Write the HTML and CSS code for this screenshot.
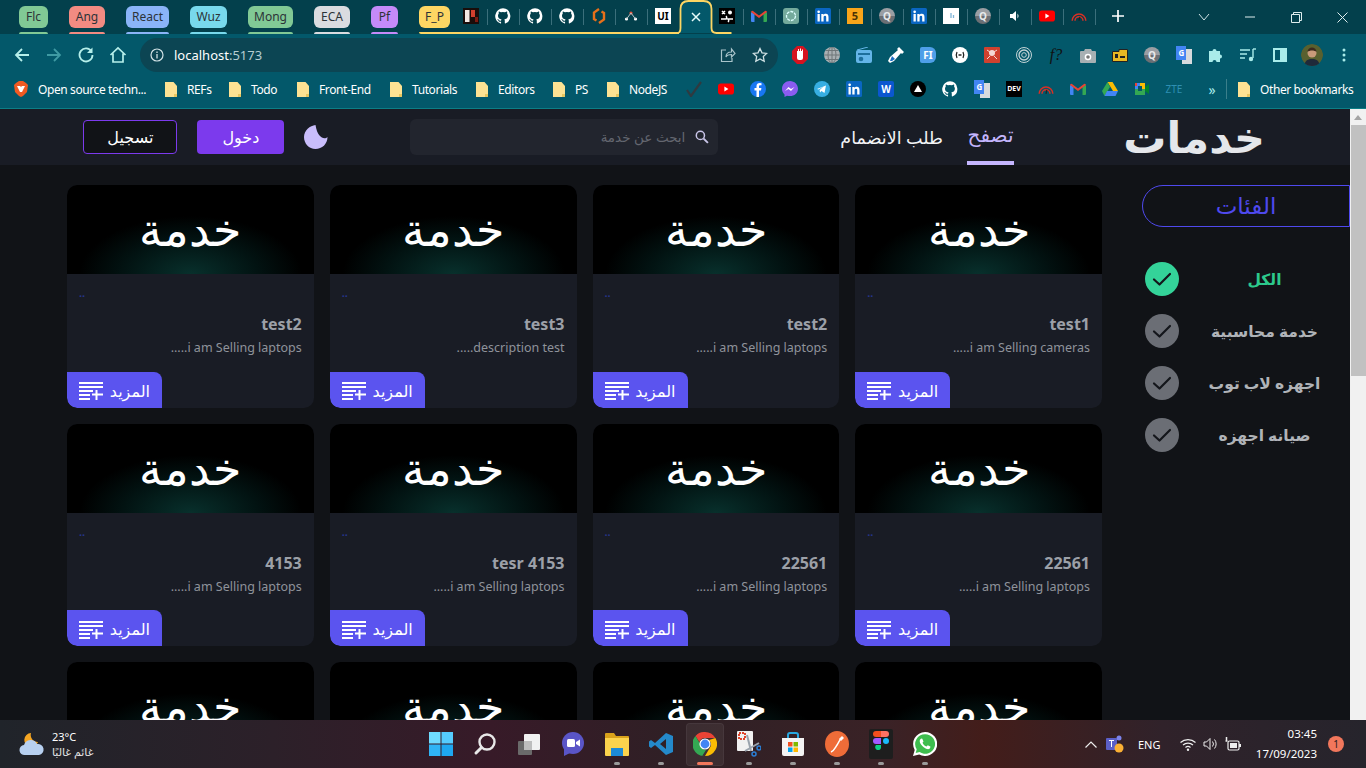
FILE: index.html
```html
<!DOCTYPE html>
<html lang="ar">
<head>
<meta charset="utf-8">
<title>خدمات</title>
<link rel="stylesheet" href="styles.css">
</head>
<body>
<svg class="defs" width="0" height="0">
  <symbol id="gh" viewBox="0 0 24 24"><path fill="#fff" d="M12 .5A11.7 11.7 0 0 0 8.300 23.300c.6.1.8-.3.8-.6v-2.200c-3.300.7-4-1.500-4-1.500-.5-1.400-1.300-1.800-1.300-1.800-1-.7.1-.7.1-.7 1.200.1 1.800 1.200 1.800 1.200 1 1.800 2.800 1.300 3.400 1 .1-.8.400-1.300.8-1.600-2.600-.3-5.400-1.300-5.400-5.800 0-1.300.5-2.300 1.200-3.100-.1-.3-.5-1.500.1-3.100 0 0 1-.3 3.200 1.200a11 11 0 0 1 5.800 0c2.200-1.500 3.200-1.200 3.200-1.200.6 1.600.2 2.800.1 3.100.7.8 1.200 1.900 1.200 3.100 0 4.500-2.800 5.500-5.400 5.800.4.400.8 1.100.8 2.200v3.200c0 .3.2.7.8.6A11.700 11.700 0 0 0 12 .5z"/></symbol>
  <symbol id="in" viewBox="0 0 16 16"><rect width="16" height="16" rx="1.500" fill="#0a66c2"/><path fill="#fff" d="M2.500 6h2.300v7.500H2.500zM3.650 2.500a1.300 1.300 0 1 1 0 2.700 1.300 1.300 0 0 1 0-2.700zM6.300 6h2.200v1c.4-.7 1.200-1.200 2.300-1.200 2.200 0 2.700 1.400 2.700 3.400v4.300h-2.300V9.700c0-.9 0-1.900-1.200-1.900s-1.400.9-1.400 1.800v3.900H6.300z"/></symbol>
  <symbol id="yt" viewBox="0 0 20 14"><rect width="20" height="14" rx="3.500" fill="#f00"/><path fill="#fff" d="M8 4l5 3-5 3z"/></symbol>
  <symbol id="gmail" viewBox="0 0 16 12"><path fill="#4285f4" d="M0 2v9a1 1 0 0 0 1 1h2.500V4z"/><path fill="#34a853" d="M16 2v9a1 1 0 0 1-1 1h-2.500V4z"/><path fill="#ea4335" d="M0 2l8 6 8-6a1.300 1.300 0 0 0-2-1L8 5.500 2 1a1.300 1.300 0 0 0-2 1z"/></symbol>
  <symbol id="gauge" viewBox="0 0 20 14"><path fill="none" stroke="#d93025" stroke-width="1.800" d="M1.500 13a8.500 8.500 0 0 1 17 0M5 13a5 5 0 0 1 10 0"/><path stroke="#222" stroke-width="1.500" d="M10 13l1-5"/></symbol>
  <symbol id="folder" viewBox="0 0 12 15"><path fill="#fde293" d="M0 0h8.500L12 4v10a1 1 0 0 1-1 1H0z"/><path fill="#e8c65f" d="M9 15v-3h3v2a1 1 0 0 1-1 1z"/></symbol>
  <symbol id="plus-list" viewBox="0 0 24 18"><path fill="#fff" d="M0 0h24v2H0zM0 4h24v2H0zM0 8h14v2H0zM0 12h11v2H0zM0 16h11v2H0zM16.500 8h2v3.500H24v2h-5.500V18h-2v-4.500H13v-2h3.500z"/></symbol>
  <symbol id="tick" viewBox="0 0 34 34"><path fill="none" stroke="#14161b" stroke-width="2.200" stroke-linecap="round" stroke-linejoin="round" d="M9 17.500l5.500 5L25 12"/></symbol>
</svg>

<header class="chrome">
  <div class="tabstrip">
    <div class="grp g-green"><span class="pill">Flc</span></div>
    <div class="grp g-red"><span class="pill">Ang</span></div>
    <div class="grp g-blue"><span class="pill">React</span></div>
    <div class="grp g-cyan"><span class="pill">Wuz</span></div>
    <div class="grp g-green"><span class="pill">Mong</span></div>
    <div class="grp g-grey"><span class="pill">ECA</span></div>
    <div class="grp g-purple"><span class="pill">Pf</span></div>
    <div class="yellow-run">
      <div class="grp g-yellow"><span class="pill">F_P</span></div>
      <div class="tab"><svg width="16" height="16" viewBox="0 0 16 16"><rect width="16" height="16" fill="#1a0d0a"/><rect x="2" y="2" width="4.500" height="12" fill="#f3e9e4"/><rect x="8" y="2" width="4" height="7" fill="#d2402e"/><rect x="12" y="9" width="3" height="5" fill="#7a1b12"/></svg></div>
      <div class="tab sep"><svg width="16" height="16"><use href="#gh"/></svg></div>
      <div class="tab sep"><svg width="16" height="16"><use href="#gh"/></svg></div>
      <div class="tab sep"><svg width="16" height="16"><use href="#gh"/></svg></div>
      <div class="tab sep"><svg width="16" height="16" viewBox="0 0 16 16"><path fill="none" stroke="#e8701a" stroke-width="2.400" d="M8 1L3 4.500V11l2.500 1.500M8 15l5-3.500V5l-2.500-1.500"/></svg></div>
      <div class="tab sep"><svg width="14" height="12" viewBox="0 0 14 12"><circle cx="7" cy="3" r="1.600" fill="#e8563f"/><circle cx="2.500" cy="9" r="1.600" fill="#fff"/><circle cx="11.500" cy="9" r="1.600" fill="#fff"/><path stroke="#b8c3c6" d="M7 3L2.500 9M7 3l4.500 6"/></svg></div>
      <div class="tab sep"><span class="ui-box">UI</span></div>
    </div>
    <div class="tab-active">
      <svg class="tab-shape" width="56" height="34" viewBox="0 0 56 34"><path fill="#03586a" d="M0 33c2.500 0 3.500-2 3.500-5V9c0-5 3-8 8-8h15c5 0 8 3 8 8v19c0 3 1 5 5 5z"/><path fill="none" stroke="#fdd663" stroke-width="1.800" d="M0 33c2.500 0 3.500-2 3.500-5V9c0-5 3-8 8-8h15c5 0 8 3 8 8v19c0 3 1 5 5 5h15"/></svg>
      <svg class="tab-x" width="10" height="10" viewBox="0 0 10 10"><path stroke="#e6fbfa" stroke-width="1.500" d="M1 1l8 8M9 1l-8 8"/></svg>
    </div>
    <div class="tab first"><svg width="16" height="16" viewBox="0 0 16 16"><rect width="16" height="16" fill="#000"/><path fill="none" stroke="#fff" stroke-width="1.500" d="M3 3l3 3M6 3L3 6M2 11h5a2 2 0 0 0 0-3M14 11H9a2 2 0 0 1 0 3"/><circle cx="11" cy="4.500" r="2" fill="#fff"/></svg></div>
    <div class="tab sep"><svg width="16" height="12"><use href="#gmail"/></svg></div>
    <div class="tab sep"><svg width="16" height="16" viewBox="0 0 16 16"><rect width="16" height="16" rx="3" fill="#74aa9c"/><circle cx="8" cy="8" r="4.500" fill="none" stroke="#dff" stroke-width="1.300" stroke-dasharray="3 1"/></svg></div>
    <div class="tab sep"><svg width="16" height="16"><use href="#in"/></svg></div>
    <div class="tab sep"><span class="five">5</span></div>
    <div class="tab sep"><span class="q-ico">Q</span></div>
    <div class="tab sep"><svg width="16" height="16"><use href="#in"/></svg></div>
    <div class="tab sep"><svg width="16" height="16" viewBox="0 0 16 16"><rect width="16" height="16" fill="#fff"/><path stroke="#7fb4d8" stroke-width="1.300" d="M8 5v5M10.500 7v3"/></svg></div>
    <div class="tab sep"><span class="q-ico">Q</span></div>
    <div class="tab sep"><svg width="12" height="12" viewBox="0 0 12 12"><path fill="#fff" d="M1 4h2.500L7 1v10L3.500 8H1zM8.500 3.500a4 4 0 0 1 0 5z"/></svg></div>
    <div class="tab sep"><svg width="16" height="12"><use href="#yt"/></svg></div>
    <div class="tab sep"><svg width="16" height="12"><use href="#gauge"/></svg></div>
    <div class="newtab sep"><svg width="14" height="14" viewBox="0 0 14 14"><path stroke="#fff" stroke-width="1.700" d="M7 1v12M1 7h12"/></svg></div>
    <div class="caption">
      <svg width="12" height="8" viewBox="0 0 12 8"><path fill="none" stroke="#cfe3e6" d="M1 1l5 6 5-6"/></svg>
      <svg width="10" height="10" viewBox="0 0 10 10"><path stroke="#dfeeee" d="M0 5h10"/></svg>
      <svg width="11" height="11" viewBox="0 0 11 11"><path fill="none" stroke="#dfeeee" d="M.5 2.500h8v8h-8zM2.500 2.500V.5h8v8h-2"/></svg>
      <svg width="11" height="11" viewBox="0 0 11 11"><path stroke="#dfeeee" d="M.5.5l10 10M10.500.5l-10 10"/></svg>
    </div>
  </div>

  <div class="toolbar">
    <div class="navbtns">
      <svg width="18" height="18" viewBox="0 0 18 18"><path fill="none" stroke="#b6efea" stroke-width="1.800" d="M16 9H3M9 3L3 9l6 6"/></svg>
      <svg width="18" height="18" viewBox="0 0 18 18"><path fill="none" stroke="#3f9aa3" stroke-width="1.800" d="M2 9h13M9 3l6 6-6 6"/></svg>
      <svg width="18" height="18" viewBox="0 0 18 18"><path fill="none" stroke="#b6efea" stroke-width="1.800" d="M14.500 5.500A6.500 6.500 0 1 0 15.500 9"/><path fill="#b6efea" d="M15.500 1.500v5.500H10z"/></svg>
      <svg width="18" height="18" viewBox="0 0 18 18"><path fill="none" stroke="#b6efea" stroke-width="1.700" d="M1.500 9L9 2l7.500 7M4 7.500V16h10V7.500"/></svg>
    </div>
    <div class="omnibox">
      <svg width="14" height="14" viewBox="0 0 14 14"><circle cx="7" cy="7" r="6" fill="none" stroke="#d3e3e6" stroke-width="1.200"/><path stroke="#d3e3e6" stroke-width="1.300" d="M7 6v4.500M7 3.500V5"/></svg>
      <span class="url"><b>localhost</b>:5173</span>
      <span class="omni-end">
        <svg width="16" height="16" viewBox="0 0 16 16"><path fill="none" stroke="#a9c4ca" stroke-width="1.200" d="M6 3H1.500v11.500h10.500V11M6 10c0-3.500 2.500-5 5.500-5V2L15 6.500 11.500 10V7.500C9 7.500 7 8 6 10z"/></svg>
        <svg width="16" height="16" viewBox="0 0 16 16"><path fill="none" stroke="#cfe0e3" stroke-width="1.300" d="M8 1.500l2 4.300 4.700.6-3.400 3.200.9 4.700L8 12l-4.200 2.300.9-4.700L1.300 6.400 6 5.800z"/></svg>
      </span>
    </div>
    <div class="ext">
      <span class="slot"><svg width="16" height="18" viewBox="0 0 16 18"><path fill="#d6121f" d="M5 0h6l5 5v8l-5 5H5l-5-5V5z"/><path fill="#fff" d="M5 5h1V3h1v2h1V2.500h1V5h1V3.500h1V12a2 2 0 0 1-2 2H7a2 2 0 0 1-2-2z"/></svg></span>
      <span class="slot"><svg width="16" height="16" viewBox="0 0 16 16"><circle cx="8" cy="8" r="8" fill="#a9b0b3"/><path fill="none" stroke="#6e7679" d="M0 8h16M8 0v16M2 3.500h12M2 12.500h12M8 0a4 8 0 0 0 0 16 4 8 0 0 0 0-16"/></svg></span>
      <span class="slot"><svg width="16" height="16" viewBox="0 0 16 16"><rect y="3" width="16" height="13" rx="2" fill="#64b5e8"/><path stroke="#64b5e8" d="M1 3l11-3"/><rect x="2" y="6" width="12" height="2" fill="#1e6f9c"/><circle cx="5" cy="12" r="2.300" fill="#1e6f9c"/></svg></span>
      <span class="slot"><svg width="16" height="16" viewBox="0 0 16 16"><path fill="#fff" d="M11 0l5 5-2 2-1-1-7 8-4 2-2-2 2-4 8-7-1-1z"/><path fill="#1e6fc4" d="M4 9l3 3-3 2-2 0z"/></svg></span>
      <span class="slot"><span class="fi">FI</span></span>
      <span class="slot"><svg width="16" height="16" viewBox="0 0 16 16"><circle cx="8" cy="8" r="8" fill="#fff"/><path fill="none" stroke="#222" stroke-width="1.300" d="M5 5C4 7 4 9 5 11M11 5c1 2 1 4 0 6M6.500 8h3"/></svg></span>
      <span class="slot"><svg width="16" height="16" viewBox="0 0 16 16"><rect width="16" height="16" rx="1" fill="#d0412f"/><circle cx="8" cy="6" r="3" fill="#f4d9d5"/><path stroke="#f4d9d5" d="M3 3l3 2M13 3l-3 2M3 12l3-3M13 12l-3-3"/></svg></span>
      <span class="slot"><svg width="16" height="16" viewBox="0 0 16 16"><g fill="none" stroke="#c3d3d6"><circle cx="8" cy="8" r="7.500"/><circle cx="8" cy="8" r="5" stroke-width="1.300"/><circle cx="8" cy="8" r="2.300"/></g></svg></span>
      <span class="slot"><span class="fq">f?</span></span>
      <span class="slot"><svg width="16" height="15" viewBox="0 0 16 15"><path fill="#a8b0b3" d="M5 1h6l1 2h3a1 1 0 0 1 1 1v10a1 1 0 0 1-1 1H1a1 1 0 0 1-1-1V4a1 1 0 0 1 1-1h3z"/><circle cx="8" cy="9" r="3.300" fill="#fff"/><circle cx="8" cy="9" r="1.800" fill="#777"/></svg></span>
      <span class="slot"><svg width="16" height="14" viewBox="0 0 16 14"><path fill="#e8b923" stroke="#222" d="M.5 3.500V13.500h15V1.500H7v2z"/><rect x="3" y="6" width="3" height="4" fill="#222"/><rect x="8" y="8" width="5" height="2" fill="#222"/></svg></span>
      <span class="slot"><span class="q-ico">Q</span></span>
      <span class="slot"><span class="gtr">G</span></span>
      <span class="slot"><svg width="16" height="16" viewBox="0 0 16 16"><path fill="#a9ecea" d="M1 4h3.500a2 2 0 1 1 4 0H12v3.500a2 2 0 1 1 0 4V15H8.500a2 2 0 1 0-4 0H1z"/></svg></span>
      <span class="slot"><svg width="16" height="14" viewBox="0 0 16 14"><path fill="none" stroke="#a9ecea" stroke-width="1.400" d="M0 2h10M0 6h7M0 10h5M13 1v9"/><path stroke="#a9ecea" stroke-width="1.400" d="M13 1h3"/><circle cx="11" cy="11" r="2.200" fill="#a9ecea"/></svg></span>
      <span class="slot"><svg width="14" height="14" viewBox="0 0 14 14"><rect x="1" y="1" width="12" height="12" fill="none" stroke="#a9ecea" stroke-width="2"/><rect x="7" y="1" width="6" height="12" fill="#a9ecea"/></svg></span>
      <span class="slot"><svg class="avatar" width="22" height="22" viewBox="0 0 22 22"><circle cx="11" cy="11" r="11" fill="#59602f"/><path fill="#1f2a3a" d="M3 22c1-6 4-7 8-7s7 1 8 7z"/><circle cx="11" cy="9" r="4.500" fill="#c99a7a"/><path fill="#3d2a1d" d="M6.500 8c0-6 9-6 9 0-2-2-7-2-9 0z"/></svg></span>
      <span class="slot"><svg width="4" height="14" viewBox="0 0 4 14"><circle cx="2" cy="2" r="1.500" fill="#a9ecea"/><circle cx="2" cy="7" r="1.500" fill="#a9ecea"/><circle cx="2" cy="12" r="1.500" fill="#a9ecea"/></svg></span>
    </div>
  </div>

  <nav class="bookmarks">
    <span class="bm brave"><svg width="14" height="16" viewBox="0 0 14 16"><path fill="#f15a22" d="M2 2l3-2h4l3 2 2 2-1 7-4 4-2 1-2-1-4-4-1-7z"/><path fill="#fff" d="M3 5h3l1 1 1-1h3l-2 4-1 2H6L5 9z"/></svg>Open source techn...</span>
    <span class="bm b-refs"><svg width="12" height="15"><use href="#folder"/></svg>REFs</span>
    <span class="bm b-todo"><svg width="12" height="15"><use href="#folder"/></svg>Todo</span>
    <span class="bm b-fe"><svg width="12" height="15"><use href="#folder"/></svg>Front-End</span>
    <span class="bm b-tut"><svg width="12" height="15"><use href="#folder"/></svg>Tutorials</span>
    <span class="bm b-ed"><svg width="12" height="15"><use href="#folder"/></svg>Editors</span>
    <span class="bm b-ps"><svg width="12" height="15"><use href="#folder"/></svg>PS</span>
    <span class="bm b-node"><svg width="12" height="15"><use href="#folder"/></svg>NodeJS</span>
    <div class="bm-icons">
      <span class="slot"><svg width="16" height="16" viewBox="0 0 16 16"><path fill="none" stroke="#2f3a40" stroke-width="2.200" d="M1 9l4 6L15 1"/></svg></span>
      <span class="slot"><svg width="16" height="12"><use href="#yt"/></svg></span>
      <span class="slot"><svg width="16" height="16" viewBox="0 0 16 16"><circle cx="8" cy="8" r="8" fill="#1877f2"/><path fill="#fff" d="M9 16V9.500h2l.4-2.500H9V5.500c0-.7.3-1.200 1.300-1.200h1.200V2.200A13 13 0 0 0 9.700 2C7.800 2 6.500 3.200 6.500 5.200V7H4.500v2.500h2V16z"/></svg></span>
      <span class="slot"><svg width="16" height="16" viewBox="0 0 16 16"><path fill="#8a5cf0" d="M8 0C3.500 0 0 3.300 0 7.700c0 2.300 1 4.300 2.500 5.700V16l2.500-1.300c1 .3 2 .4 3 .4 4.500 0 8-3.300 8-7.400S12.500 0 8 0z"/><path fill="#fff" d="M3 10l3.500-4 2.500 2 3.500-2-3.500 4-2.500-2z"/></svg></span>
      <span class="slot"><svg width="16" height="16" viewBox="0 0 16 16"><circle cx="8" cy="8" r="8" fill="#37aee2"/><path fill="#fff" d="M3 8l9-3.500-1.500 7.500-3-2-1.500 1.500-.4-2.500 4-3.500-5 3z"/></svg></span>
      <span class="slot"><svg width="16" height="16"><use href="#in"/></svg></span>
      <span class="slot"><span class="wbox">W</span></span>
      <span class="slot"><svg width="16" height="16" viewBox="0 0 16 16"><circle cx="8" cy="8" r="8" fill="#000"/><path fill="#fff" d="M8 4l4 7H4z"/></svg></span>
      <span class="slot"><svg width="16" height="16"><use href="#gh"/></svg></span>
      <span class="slot"><span class="gtr">G</span></span>
      <span class="slot"><span class="dev">DEV</span></span>
      <span class="slot"><svg width="16" height="12"><use href="#gauge"/></svg></span>
      <span class="slot"><svg width="16" height="12"><use href="#gmail"/></svg></span>
      <span class="slot"><svg width="16" height="14" viewBox="0 0 16 14"><path fill="#fbbc04" d="M5.500 0h5l5.500 9h-5z"/><path fill="#34a853" d="M5.500 0L0 9l2.500 5 5.500-9z"/><path fill="#4285f4" d="M5 9h11l-2.500 5h-11z"/></svg></span>
      <span class="slot"><svg width="16" height="14" viewBox="0 0 16 14"><rect x="1" y="1" width="10" height="12" fill="#fbbc04"/><path fill="#34a853" d="M1 7h10v6H1z"/><path fill="#4285f4" d="M1 1h5v6H1z"/><path fill="#ea4335" d="M1 1h2v3H1z"/><path fill="#00832d" d="M11 5l4-3v10l-4-3z"/><rect x="4" y="4" width="4" height="5" fill="#045768"/></svg></span>
      <span class="slot zte">ZTE</span>
    </div>
    <span class="more">»</span>
    <span class="bm-sep"></span>
    <span class="bm other"><svg width="12" height="15"><use href="#folder"/></svg>Other bookmarks</span>
  </nav>
</header>

<div class="viewport">
  <div class="page" dir="rtl">
    <div class="topbar">
      <div class="logo">خدمات</div>
      <nav class="menu">
        <a class="menu-link is-on">تصفح</a>
        <a class="menu-link">طلب الانضمام</a>
      </nav>
      <label class="search">
        <svg width="14" height="14" viewBox="0 0 13 13"><circle cx="5" cy="5" r="3.800" fill="none" stroke="#c9c5e8" stroke-width="1.400"/><path stroke="#c9c5e8" stroke-width="1.800" d="M8 8l4 4"/></svg>
        <span>ابحث عن خدمة</span>
      </label>
      <svg class="moon" width="24" height="24" viewBox="0 0 24 24"><path fill="#c9bdfb" d="M12.500 0C18 .5 24 5.500 24 12s-5 12-11.500 12S.5 19 .5 12C3.500 15 10.500 13 12.500 0z"/></svg>
      <button class="btn btn-fill">دخول</button>
      <button class="btn btn-line">تسجيل</button>
    </div>

    <div class="content">
      <aside class="side">
        <h2 class="side-title">الفئات</h2>
        <ul class="cats">
          <li class="cat is-on"><span class="cat-name">الكل</span><svg class="cat-tick" width="34" height="34"><use href="#tick"/></svg></li>
          <li class="cat"><span class="cat-name">خدمة محاسبية</span><svg class="cat-tick" width="34" height="34"><use href="#tick"/></svg></li>
          <li class="cat"><span class="cat-name">اجهزه لاب توب</span><svg class="cat-tick" width="34" height="34"><use href="#tick"/></svg></li>
          <li class="cat"><span class="cat-name">صيانه اجهزه</span><svg class="cat-tick" width="34" height="34"><use href="#tick"/></svg></li>
        </ul>
      </aside>

      <main class="grid">
        <article class="card"><div class="thumb">خدمة</div><div class="dots">..</div><h3>test1</h3><p>i am Selling cameras.....</p><a class="more-btn">المزيد<svg width="24" height="18"><use href="#plus-list"/></svg></a></article>
        <article class="card"><div class="thumb">خدمة</div><div class="dots">..</div><h3>test2</h3><p>i am Selling laptops.....</p><a class="more-btn">المزيد<svg width="24" height="18"><use href="#plus-list"/></svg></a></article>
        <article class="card"><div class="thumb">خدمة</div><div class="dots">..</div><h3>test3</h3><p>description test.....</p><a class="more-btn">المزيد<svg width="24" height="18"><use href="#plus-list"/></svg></a></article>
        <article class="card"><div class="thumb">خدمة</div><div class="dots">..</div><h3>test2</h3><p>i am Selling laptops.....</p><a class="more-btn">المزيد<svg width="24" height="18"><use href="#plus-list"/></svg></a></article>
        <article class="card"><div class="thumb">خدمة</div><div class="dots">..</div><h3>22561</h3><p>i am Selling laptops.....</p><a class="more-btn">المزيد<svg width="24" height="18"><use href="#plus-list"/></svg></a></article>
        <article class="card"><div class="thumb">خدمة</div><div class="dots">..</div><h3>22561</h3><p>i am Selling laptops.....</p><a class="more-btn">المزيد<svg width="24" height="18"><use href="#plus-list"/></svg></a></article>
        <article class="card"><div class="thumb">خدمة</div><div class="dots">..</div><h3>tesr 4153</h3><p>i am Selling laptops.....</p><a class="more-btn">المزيد<svg width="24" height="18"><use href="#plus-list"/></svg></a></article>
        <article class="card"><div class="thumb">خدمة</div><div class="dots">..</div><h3>4153</h3><p>i am Selling laptops.....</p><a class="more-btn">المزيد<svg width="24" height="18"><use href="#plus-list"/></svg></a></article>
        <article class="card"><div class="thumb">خدمة</div></article>
        <article class="card"><div class="thumb">خدمة</div></article>
        <article class="card"><div class="thumb">خدمة</div></article>
        <article class="card"><div class="thumb">خدمة</div></article>
      </main>
    </div>
  </div>
  <div class="scrollbar">
    <span class="sb-up"></span>
    <span class="sb-thumb"></span>
  </div>
</div>

<footer class="taskbar">
  <div class="weather">
    <svg width="28" height="26" viewBox="0 0 28 26"><path fill="#f5a623" d="M13 2a7 7 0 1 0 7 9 7 7 0 0 1-7-9z"/><path fill="#b7d0f0" d="M7 24a5 5 0 0 1-1-10 7 7 0 0 1 13-1 5.500 5.500 0 0 1 2 11z"/></svg>
    <div class="w-text"><span>23°C</span><span class="w-ar">غائم غالبًا</span></div>
  </div>
  <div class="apps">
    <span class="app"><svg width="24" height="24" viewBox="0 0 24 24"><rect width="11.500" height="11.500" fill="#6fdcff"/><rect x="12.500" width="11.500" height="11.500" fill="#55ccff"/><rect y="12.500" width="11.500" height="11.500" fill="#2fb4f5"/><rect x="12.500" y="12.500" width="11.500" height="11.500" fill="#1ea7f0"/></svg></span>
    <span class="app"><svg width="24" height="24" viewBox="0 0 24 24"><circle cx="14" cy="10" r="7.500" fill="none" stroke="#e8e8e8" stroke-width="2.400"/><path stroke="#e8e8e8" stroke-width="3" stroke-linecap="round" d="M8.500 15.500L3 21"/></svg></span>
    <span class="app"><svg width="24" height="24" viewBox="0 0 24 24"><rect x="1" y="9" width="14" height="14" rx="1" fill="#6a6a6a"/><rect x="7" y="2" width="16" height="16" rx="1" fill="#f1f1f1"/><rect x="7" y="9" width="8" height="9" fill="#bdbdbd"/></svg></span>
    <span class="app"><svg width="24" height="24" viewBox="0 0 24 24"><circle cx="12" cy="11" r="11" fill="#5a55c7"/><path fill="#5a55c7" d="M3 16v8l6-3z"/><rect x="6" y="7" width="8" height="8" rx="1.500" fill="#fff"/><path fill="#fff" d="M15 10l4-2.500v7L15 12z"/></svg></span>
    <span class="app run"><svg width="24" height="24" viewBox="0 0 24 24"><path fill="#d9a21b" d="M0 2a1 1 0 0 1 1-1h8l2 3h12a1 1 0 0 1 1 1v3H0z"/><path fill="#fbd34d" d="M0 6h24v17a1 1 0 0 1-1 1H1a1 1 0 0 1-1-1z"/><rect x="6" y="16" width="12" height="8" fill="#1c8ad6"/></svg></span>
    <span class="app run"><svg width="24" height="24" viewBox="0 0 24 24"><path fill="#2489ca" d="M17 1l7 3v16l-7 3L6 13l-4 3-2-1.500V9.500L2 8l4 3zM17 7l-6 5 6 5z"/></svg></span>
    <span class="app chrome-app"><svg width="24" height="24" viewBox="0 0 24 24"><path fill="#ea4335" d="M12 0a12 12 0 0 1 10.400 6H12a6 6 0 0 0-5.700 4L2.500 4A12 12 0 0 1 12 0z"/><path fill="#34a853" d="M12 24A12 12 0 0 1 2.500 4l5 8.500A6 6 0 0 0 13 18l-3.700 5.800z"/><path fill="#fbbc04" d="M22.400 6A12 12 0 0 1 12 24l5-8.500A6 6 0 0 0 16 8z"/><circle cx="12" cy="12" r="5" fill="#4285f4" stroke="#fff" stroke-width="1.200"/></svg></span>
    <span class="app run"><svg width="24" height="26" viewBox="0 0 24 26"><rect x="0" y="0" width="16" height="20" rx="1" fill="#f1f1f1"/><rect x="2" y="2" width="6" height="6" fill="none" stroke="#e0452c" stroke-width="2" stroke-dasharray="2 1"/><path stroke="#9aa3ad" stroke-width="2" d="M10 4l4 16M22 12L8 20"/><circle cx="17" cy="23" r="2" fill="none" stroke="#2a7fd6" stroke-width="1.500"/><circle cx="22" cy="17" r="2" fill="none" stroke="#2a7fd6" stroke-width="1.500"/></svg></span>
    <span class="app run"><svg width="24" height="26" viewBox="0 0 24 26"><path fill="none" stroke="#28a8e0" stroke-width="2" d="M7 7V4a2 2 0 0 1 2-2h6a2 2 0 0 1 2 2v3"/><path fill="#f4f4f4" d="M1 7h22v16a2 2 0 0 1-2 2H3a2 2 0 0 1-2-2z"/><rect x="7" y="11" width="4.500" height="4.500" fill="#f25022"/><rect x="12.500" y="11" width="4.500" height="4.500" fill="#7fba00"/><rect x="7" y="16.500" width="4.500" height="4.500" fill="#00a4ef"/><rect x="12.500" y="16.500" width="4.500" height="4.500" fill="#ffb900"/></svg></span>
    <span class="app run"><svg width="24" height="26" viewBox="0 0 24 26"><ellipse cx="12" cy="13" rx="12" ry="13" fill="#ef6c38"/><path fill="none" stroke="#fff" stroke-width="1.500" d="M6 21c3-1 4-4 6-7l4-7"/><path fill="#fff" d="M14 8l3-3 2 2-3 3z"/></svg></span>
    <span class="app run"><svg width="24" height="30" viewBox="0 0 24 30"><rect width="24" height="30" rx="2" fill="#1e1e1e"/><path fill="#f24e1e" d="M7 2h5v6H7a3 3 0 0 1 0-6z"/><path fill="#ff7262" d="M12 2h5a3 3 0 0 1 0 6h-5z"/><path fill="#a259ff" d="M7 9h5v6H7a3 3 0 0 1 0-6z"/><circle cx="17" cy="12" r="3" fill="#1abcfe"/><path fill="#0acf83" d="M7 16h5v3a3 3 0 1 1-5-3z"/></svg></span>
    <span class="app run"><svg width="24" height="24" viewBox="0 0 24 24"><path fill="#fff" d="M12 0a12 12 0 0 0-10.300 18L0 24l6.200-1.600A12 12 0 1 0 12 0z"/><path fill="#3ebd4e" d="M12 2.200a9.800 9.800 0 0 0-8.300 15l-1 3.800 3.900-1A9.800 9.800 0 1 0 12 2.200z"/><path fill="#fff" d="M8.500 6.500c-.5 0-1.800 1-1.800 2.800s1.700 4.200 4 5.900 4.500 2.600 5.800 1.500c1-1 1-2 .8-2.200l-2.500-1.300-1.300 1.300c-1.500-.5-3.300-2-4-3.800l1-1.300-1.200-2.700z"/></svg></span>
  </div>
  <div class="tray">
    <svg class="t-caret" width="12" height="7" viewBox="0 0 12 7"><path fill="none" stroke="#eee" stroke-width="1.200" d="M.5 6.500L6 1l5.500 5.500"/></svg>
    <svg class="t-teams" width="18" height="18" viewBox="0 0 18 18"><rect y="3" width="11" height="12" rx="1" fill="#5b5fc7"/><circle cx="13" cy="3" r="2.500" fill="#7b83eb"/><circle cx="13" cy="13" r="4.500" fill="#fbb034"/><path stroke="#fff" d="M5.500 5.500V12M3 5.500h5"/></svg>
    <span class="t-lang">ENG</span>
    <svg class="t-wifi" width="16" height="13" viewBox="0 0 16 13"><path fill="none" stroke="#eee" stroke-width="1.200" d="M.5 4.500a11 11 0 0 1 15 0M3 7a7.500 7.500 0 0 1 10 0M5.500 9.500a3.800 3.800 0 0 1 5 0"/><circle cx="8" cy="11.700" r="1.200" fill="#eee"/></svg>
    <svg class="t-vol" width="15" height="14" viewBox="0 0 15 14"><path fill="none" stroke="#eee" d="M1 5h2.500L7 1.500v11L3.500 9H1zM9.500 4.500a4 4 0 0 1 0 5M11.500 2.500a7 7 0 0 1 0 9"/></svg>
    <svg class="t-bat" width="16" height="15" viewBox="0 0 16 15"><rect x="3" y="4" width="11" height="9" rx="1.500" fill="none" stroke="#eee" stroke-width="1.200"/><rect x="5" y="6" width="7" height="5" fill="#eee"/><path stroke="#eee" stroke-width="1.500" d="M1.500 0v4M.5 4h2"/><rect x="14" y="7" width="2" height="3" fill="#eee"/></svg>
    <div class="clock"><span>03:45</span><span>17/09/2023</span></div>
    <span class="badge">1</span>
  </div>
</footer>
</body>
</html>
```
FILE: styles.css
```css
* { box-sizing: border-box; }
html, body { margin: 0; padding: 0; height: 100%; overflow: hidden; }
body { width: 1366px; height: 768px; display: flex; flex-direction: column; background: #111317; font-family: "Noto Sans", "Open Sans", "DejaVu Sans", sans-serif; color: #fff; }
svg { display: block; flex: none; }
.defs { position: absolute; }

/* browser chrome */
.chrome { height: 109px; flex: none; background: #03586a; border-bottom: 1px solid #0c7e86; }
.tabstrip { height: 34px; display: flex; align-items: flex-start; padding-left: 19px; background: #03404c; }
.grp { height: 34px; margin-right: 21px; position: relative; padding-top: 6px; }
.pill { display: block; height: 22px; padding: 0 2px; border-radius: 6px; font: 12px/22px "Noto Sans", sans-serif; color: #2c3338; text-align: center; white-space: nowrap; }
.grp::after { content: ""; position: absolute; left: 0; right: 0; bottom: 0; height: 2px; border-radius: 2px 2px 0 0; background: inherit; }
.g-green .pill { background: #81c995; width: 29px; }
.g-red .pill { background: #f28b82; width: 36px; }
.g-blue .pill { background: #8ab4f8; width: 43px; }
.g-cyan .pill { background: #78d9ec; width: 37px; }
.g-grey .pill { background: #dadce0; width: 36px; }
.g-purple .pill { background: #c58af9; width: 27px; }
.g-yellow .pill { background: #fdd663; width: 31px; }
.grp:nth-child(5) .pill { width: 45px; }
.g-green::after { background: #81c995; }
.g-red::after { background: #f28b82; }
.g-blue::after { background: #8ab4f8; }
.g-cyan::after { background: #78d9ec; }
.g-grey::after { background: #dadce0; }
.g-purple::after { background: #c58af9; }
.g-yellow::after { display: none; }
.g-yellow { margin-right: 5px; }
.yellow-run { display: flex; height: 34px; border-bottom: 2px solid #fdd663; border-radius: 0 0 0 2px; width: 260px; }
.tab { width: 32px; height: 32px; display: flex; align-items: center; justify-content: center; position: relative; flex: none; }
.tab.sep::before, .newtab.sep::before { content: ""; position: absolute; left: 0; top: 9px; height: 16px; width: 1px; background: #3b6f7b; }
.tab-active { width: 32px; height: 34px; flex: none; position: relative; }
.tab-shape { position: absolute; left: -2px; top: 0; }
.tab-x { position: absolute; left: 12px; top: 12px; }
.ui-box { width: 16px; height: 16px; background: #fff; color: #000; font: 700 10px/16px "Noto Sans", sans-serif; text-align: center; }
.five { width: 16px; height: 16px; background: #f9a51a; color: #4a3205; font: 700 11px/16px "Noto Sans", sans-serif; text-align: center; }
.q-ico { width: 16px; height: 16px; border-radius: 50%; background: linear-gradient(#9a9ea3 50%, #6b6f74 50%); color: #e8eaec; font: 700 10px/16px "Noto Sans", sans-serif; text-align: center; }
.gtr { width: 16px; height: 18px; color: #fff; font: 700 8px/13px "Noto Sans", sans-serif; padding-right: 5px; text-align: center; background: linear-gradient(#4285f4, #4285f4) 0 0 / 10px 14px no-repeat, linear-gradient(#d7dadd, #d7dadd) 6px 3px / 10px 15px no-repeat; }
.newtab { width: 38px; height: 32px; display: flex; align-items: center; justify-content: center; position: relative; padding-left: 8px; }
.caption { margin-left: 48px; height: 34px; display: grid; grid-template-columns: repeat(4, 46px); justify-items: center; align-items: center; }

.toolbar { height: 42px; display: flex; align-items: center; padding-left: 13px; }
.navbtns { display: flex; gap: 14px; width: 127px; flex: none; }
.omnibox { width: 638px; height: 34px; border-radius: 17px; background: #0c4553; display: flex; align-items: center; padding: 0 10px; flex: none; }
.url { margin-left: 10px; font: 13px "Noto Sans", sans-serif; color: #b6cdd2; }
.url b { font-weight: 400; color: #fff; }
.omni-end { margin-left: auto; display: flex; gap: 16px; }
.ext { display: flex; margin-left: 6px; }
.slot { width: 32px; height: 32px; display: flex; align-items: center; justify-content: center; flex: none; }
.avatar { border-radius: 50%; }
.fi { width: 16px; height: 16px; background: #4f9fe8; border-radius: 2px 6px 6px 2px; color: #fff; font: 700 10px/16px "Noto Sans", sans-serif; text-align: center; }
.fq { font: italic 16px "Liberation Serif", serif; color: #111; }

.bookmarks { height: 32px; padding: 0 0 6px 14px; display: flex; align-items: center; font: 12px "Noto Sans", sans-serif; }
.bm { display: flex; align-items: center; flex: none; letter-spacing: -.4px; white-space: nowrap; }
.bm svg { margin-right: 10px; }
.brave { width: 151px; }
.b-refs { width: 64px; }
.b-todo { width: 68px; }
.b-fe { width: 93px; }
.b-tut { width: 86px; }
.b-ed { width: 77px; }
.b-ps { width: 54px; }
.b-node { width: 71px; }
.bm-icons { display: flex; flex: none; width: 512px; }
.zte { font: 10px "Noto Sans", sans-serif; color: #2e8fb3; }
.wbox { width: 16px; height: 16px; border-radius: 2px; background: #0b57d0; font: 700 10px/16px "Noto Sans", sans-serif; text-align: center; }
.dev { width: 16px; height: 16px; background: #000; font: 700 7px/16px "Noto Sans", sans-serif; text-align: center; }
.more { margin-left: 13px; width: 18px; color: #a9ecea; font-size: 14px; text-align: center; }
.bm-sep { width: 1px; height: 20px; background: #3b7f8b; margin: 0 11px 0 5px; }

/* page */
.viewport { flex: 1; min-height: 0; display: flex; overflow: hidden; }
.page { flex: 1; min-width: 0; overflow: hidden; }
.scrollbar { width: 16px; flex: none; background: #f1f1f1; display: flex; flex-direction: column; align-items: center; }
.sb-up { width: 0; height: 0; margin: 6px 0 5px; border: 4px solid transparent; border-top: 0; border-bottom: 5px solid #a3a3a3; }
.sb-thumb { width: 15px; height: 251px; margin-left: 1px; background: #c1c1c1; }

.topbar { height: 56px; background: #191c25; display: flex; align-items: center; padding-right: 85px; }
.logo { font-size: 43px; line-height: 56px; font-weight: 700; color: #e5e7eb; width: 140px; text-align: center; flex: none; white-space: nowrap; }
.menu { display: flex; align-self: stretch; gap: 24px; margin-right: 111px; flex: none; }
.menu-link { font-size: 17.500px; line-height: 56px; height: 56px; color: #f3f4f6; }
.menu-link.is-on { color: #c4b5fd; border-bottom: 4px solid #c4b5fd; width: 47px; text-align: center; font-size: 20px; line-height: 52px; }
.search { width: 308px; height: 36px; margin-right: 122px; border-radius: 6px; background: #22252e; display: flex; align-items: center; gap: 10px; padding-right: 9px; font-size: 13.500px; color: #646770; flex: none; }
.moon { margin-right: 82px; flex: none; transform: scaleX(-1); }
.btn { height: 34px; border-radius: 4px; font: 16px "Noto Sans", "DejaVu Sans", sans-serif; color: #fff; flex: none; }
.btn-fill { width: 87px; margin-right: 20px; background: #7c3aed; border: 0; }
.btn-line { width: 94px; margin-right: 20px; background: #111317; border: 1px solid #7c3aed; }

.content { display: flex; height: 555px; align-items: flex-start; padding-top: 20px; }
.side { width: 208px; flex: none; margin-left: 40px; }
.side-title { margin: 0; height: 42px; border: 1px solid #4f49ee; border-radius: 21px 0 0 21px; color: #4f49ee; font-size: 23px; font-weight: 400; line-height: 38px; text-align: center; }
.cats { list-style: none; margin: 35px 0 0; padding: 0; display: flex; flex-direction: column; gap: 18px; }
.cat { display: flex; align-items: center; height: 34px; width: 205px; color: #b0b3b8; font-size: 15.500px; font-weight: 700; }
.cat-name { flex: 1; text-align: center; white-space: nowrap; }
.cat-tick { background: #6b6e75; border-radius: 50%; }
.cat.is-on { color: #2cc98c; }
.cat.is-on .cat-tick { background: #34d399; }

.grid { width: 1035px; flex: none; display: grid; grid-template-columns: repeat(4, 1fr); gap: 16px; grid-auto-rows: 222.500px; }
.card { position: relative; background: #191c25; border-radius: 10px; overflow: hidden; padding-bottom: 36px; }
.thumb { height: 89px; background: radial-gradient(ellipse 45% 65% at 50% 100%, #08302c 0%, #021312 60%, #000 100%); font-size: 46px; font-weight: 300; line-height: 86px; text-align: center; color: #fff; }
.dots { direction: ltr; text-align: left; height: 34px; padding: 9px 0 0 12px; font-size: 11px; line-height: 20px; color: #26358a; font-weight: 700; }
.card h3 { margin: 4px 12px 0; font: 700 16px/24px "Noto Sans", sans-serif; color: #9ca0a8; }
.card p { margin: 0 12px; font: 12.500px/24px "Noto Sans", sans-serif; color: #8f939b; }
.more-btn { position: absolute; left: 0; bottom: 0; width: 95px; height: 36px; background: #5b54ef; border-radius: 0 8px 0 10px; display: flex; align-items: center; justify-content: space-between; padding: 3px 12px 0; font-size: 16px; line-height: 33px; color: #fff; }

/* taskbar */
.taskbar { height: 48px; flex: none; display: flex; align-items: center; background: linear-gradient(90deg, #20242a 0%, #2c2029 20%, #371a28 36%, #2f2025 50%, #3a2226 65%, #431d1a 72%, #30222a 85%, #26242c 100%); font: 12px "Noto Sans", "DejaVu Sans", sans-serif; }
.weather { width: 419px; flex: none; display: flex; align-items: center; gap: 6px; padding-left: 18px; }
.w-text { display: flex; flex-direction: column; font-size: 11px; line-height: 15px; }
.w-ar { color: #e4e4e4; }
.apps { display: flex; width: 528px; flex: none; }
.app { width: 44px; height: 48px; display: flex; align-items: center; justify-content: center; position: relative; }
.app.run::after { content: ""; position: absolute; bottom: 3px; left: 19px; width: 6px; height: 3px; border-radius: 2px; background: #9a9a9a; }
.chrome-app::before { content: ""; position: absolute; left: 3px; top: 3px; right: 3px; bottom: 2px; border-radius: 4px; background: rgba(255,255,255,.06); border: 1px solid rgba(255,255,255,.05); }
.chrome-app svg { position: relative; }
.chrome-app::after { content: ""; position: absolute; bottom: 3px; left: 14px; width: 16px; height: 3px; border-radius: 2px; background: #f2775c; }
.tray { flex: 1; display: flex; align-items: center; padding-left: 138px; }
.t-caret { margin-right: 9px; }
.t-teams { margin-right: 14px; }
.t-lang { width: 24px; margin-right: 18px; font-size: 11px; }
.t-wifi { margin-right: 7px; }
.t-vol { margin-right: 7px; }
.t-bat { margin-right: 3px; }
.clock { width: 73px; display: flex; flex-direction: column; align-items: flex-end; font-size: 11.500px; line-height: 20px; }
.badge { width: 16px; height: 16px; margin-left: 11px; border-radius: 50%; background: #f2775c; color: #2a1c1c; font-size: 10px; line-height: 16px; text-align: center; }
```
